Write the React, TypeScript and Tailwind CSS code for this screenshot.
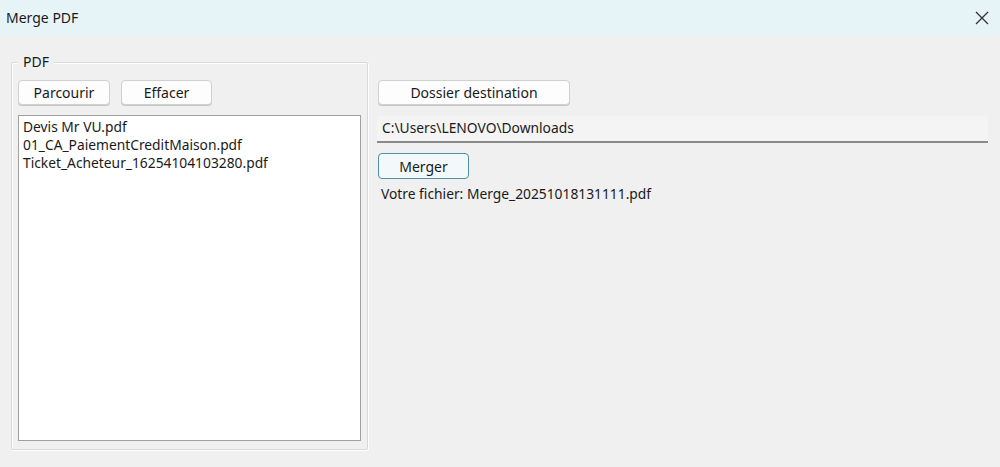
import React from 'react';

const files = [
  'Devis Mr VU.pdf',
  '01_CA_PaiementCreditMaison.pdf',
  'Ticket_Acheteur_16254104103280.pdf',
];

const WinButton = ({ label, className = '' }: { label: string; className?: string }) => (
  <button
    className={`h-[25px] rounded-[4px] border border-[#d0d0d0] bg-[#fdfdfd] text-[14px] text-[#1a1a1a] shadow-[0_1px_0_#c8c8c8] ${className}`}
  >
    {label}
  </button>
);

const App: React.FC = () => {
  return (
    <div
      className="w-[1000px] h-[467px] bg-[#f0f0f0] flex flex-col overflow-hidden text-[#1a1a1a] text-[13.8px]"
      style={{ fontFamily: '"Noto Sans", "Open Sans", sans-serif' }}
    >
      <header className="h-[35px] bg-[#e6f4f8] flex items-center justify-between pl-[6px] pr-[11px] shrink-0">
        <span className="text-[14px]">Merge PDF</span>
        <svg width="14" height="14" viewBox="0 0 14 14" className="text-[#333]">
          <path d="M1 1 L13 13 M13 1 L1 13" stroke="currentColor" strokeWidth="1.3" fill="none" />
        </svg>
      </header>

      <div className="flex pt-[27px] pl-[11px] pr-[12px]">
        <div className="relative w-[357px] h-[388px] border border-[#d9d9d9] shadow-[inset_1px_1px_0_#fff,1px_1px_0_#fff] rounded-[2px] pl-[6px] pt-[17px] flex flex-col">
          <span className="absolute -top-[10px] left-[6px] px-[5px] bg-[#f0f0f0] text-[14px] leading-[18px]">PDF</span>
          <div className="flex gap-[11px]">
            <WinButton label="Parcourir" className="w-[92px]" />
            <WinButton label="Effacer" className="w-[91px]" />
          </div>
          <ul className="mt-[10px] w-[343px] h-[326px] bg-white border border-[#a0a0a0] px-[4px] pt-[2px] leading-[18px]">
            {files.map(f => (
              <li key={f}>{f}</li>
            ))}
          </ul>
        </div>

        <div className="flex-1 flex flex-col pt-[18px] pl-[9px]">
          <WinButton label="Dossier destination" className="w-[192px] ml-[1px]" />
          <div className="mt-[11px] h-[27px] bg-[#f4f4f4] border-b-2 border-[#8a8a8a] rounded-t-[3px] flex items-center pl-[5px]">
            C:\Users\LENOVO\Downloads
          </div>
          <button className="mt-[10px] ml-[1px] w-[91px] h-[26px] rounded-[4px] border border-[#4d8fa8] bg-[#f3f9fb] text-[14px]">
            Merger
          </button>
          <p className="mt-[6px] ml-[4px] leading-[18px]">Votre fichier: Merge_20251018131111.pdf</p>
        </div>
      </div>
    </div>
  );
};

export default App;
